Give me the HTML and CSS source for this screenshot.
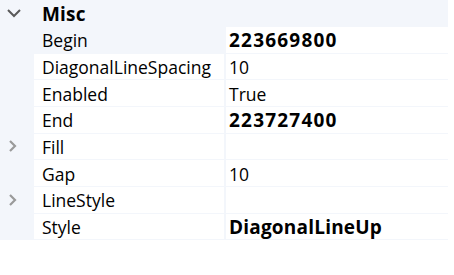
FILE: index.html
```html
<!DOCTYPE html>
<html>
<head>
<meta charset="utf-8">
<link rel="stylesheet" href="styles.css">
</head>
<body>
<div class="grid">
  <div class="row cat">
    <div class="gut"><svg class="down" width="16" height="10" viewBox="0 0 16 10"><path d="M2 2 L8 8 L14 2" fill="none" stroke="#5a5a5a" stroke-width="2"/></svg></div>
    <div class="name b">Misc</div>
    <div class="sep"></div>
    <div class="val"></div>
  </div>
  <div class="row">
    <div class="gut"></div>
    <div class="name sel">Begin</div>
    <div class="sep"></div>
    <div class="val b num">223669800</div>
  </div>
  <div class="row">
    <div class="gut"></div>
    <div class="name">DiagonalLineSpacing</div>
    <div class="sep"></div>
    <div class="val">10</div>
  </div>
  <div class="row">
    <div class="gut"></div>
    <div class="name">Enabled</div>
    <div class="sep"></div>
    <div class="val">True</div>
  </div>
  <div class="row">
    <div class="gut"></div>
    <div class="name">End</div>
    <div class="sep"></div>
    <div class="val b num">223727400</div>
  </div>
  <div class="row">
    <div class="gut"><svg class="right" width="10" height="14" viewBox="0 0 10 14"><path d="M2 2 L7 7 L2 12" fill="none" stroke="#9a9a9a" stroke-width="2.2"/></svg></div>
    <div class="name">Fill</div>
    <div class="sep"></div>
    <div class="val"></div>
  </div>
  <div class="row">
    <div class="gut"></div>
    <div class="name">Gap</div>
    <div class="sep"></div>
    <div class="val">10</div>
  </div>
  <div class="row">
    <div class="gut"><svg class="right" width="10" height="14" viewBox="0 0 10 14"><path d="M2 2 L7 7 L2 12" fill="none" stroke="#9a9a9a" stroke-width="2.2"/></svg></div>
    <div class="name">LineStyle</div>
    <div class="sep"></div>
    <div class="val"></div>
  </div>
  <div class="row">
    <div class="gut"></div>
    <div class="name">Style</div>
    <div class="sep"></div>
    <div class="val b">DiagonalLineUp</div>
  </div>
</div>
</body>
</html>
```
FILE: styles.css
```css
html, body {
  margin: 0;
  padding: 0;
  background: #ffffff;
}
.grid {
  width: 448px;
  background: #f3f6fb;
  display: flex;
  flex-direction: column;
  gap: 1px;
  padding-bottom: 1px;
  font-family: "Open Sans", "Liberation Sans", sans-serif;
  font-size: 17.5px;
  color: #000;
}
.row {
  display: grid;
  grid-template-columns: 34px 190px 2px 222px;
  height: 25.67px;
}
.cat {
  height: 26px;
}
.gut {
  display: flex;
  align-items: center;
  justify-content: center;
}
.down { margin-left: -6px; }
.right { margin-left: -8px; }
.name, .val {
  background: #fff;
  display: flex;
  align-items: center;
  white-space: nowrap;
  overflow: hidden;
  padding-top: 1px;
  box-sizing: border-box;
}
.name { padding-left: 8px; }
.val { padding-left: 3px; }
.cat .name, .cat .val, .name.sel { background: transparent; }
.b { font-weight: bold; font-size: 19px; letter-spacing: 0.2px; }
.b.num { letter-spacing: 1.2px; }
```
